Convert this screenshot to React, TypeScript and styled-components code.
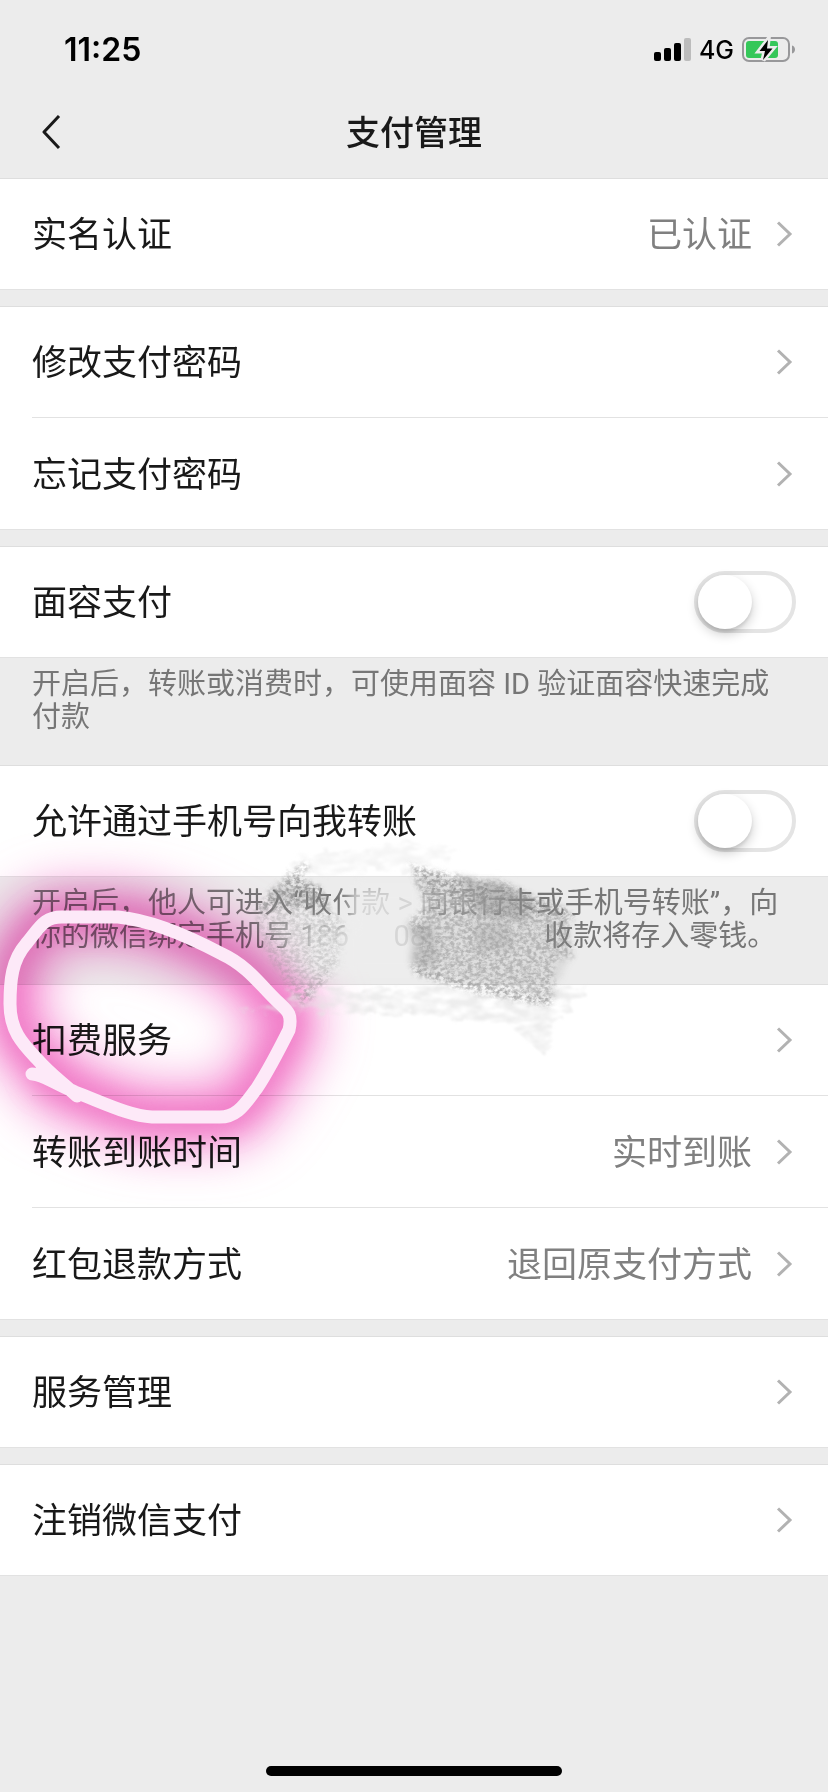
import React from "react";
import styled, { createGlobalStyle, css } from "styled-components";

const GlobalStyle = createGlobalStyle`
  *, *::before, *::after { box-sizing: border-box; }
  body {
    margin: 0;
    background: #ececec;
    color: #191919;
    font-family: Inter, "Noto Sans CJK SC", sans-serif;
  }
`;

const Page = styled.div`
  position: relative;
  display: flex;
  flex-direction: column;
  min-height: 100vh;
  overflow: hidden;
  background: #ececec;
`;

const StatusBar = styled.div`
  display: flex;
  align-items: center;
  justify-content: space-between;
  height: 88px;
  padding: 12px 32px 0 64px;
  color: #000;
`;

const Clock = styled.time`
  font-size: 32px;
  line-height: 40px;
  font-weight: 600;
`;

const StatusIcons = styled.div`
  display: flex;
  align-items: center;
  gap: 8px;
`;

const Network = styled.span`
  font-size: 25px;
  line-height: 32px;
  font-weight: 500;
`;

const NavBar = styled.header`
  display: grid;
  grid-template-columns: 88px 1fr 88px;
  align-items: center;
  height: 90px;
`;

const BackButton = styled.button`
  display: flex;
  align-items: center;
  height: 88px;
  padding: 0 0 0 40px;
  border: 0;
  background: none;
  color: #191919;
`;

const Title = styled.h1`
  margin: 0;
  text-align: center;
  font-size: 34px;
  line-height: 48px;
  font-weight: 500;
`;

const Main = styled.main`
  display: flex;
  flex-direction: column;
`;

const Group = styled.section<{ $spaced?: boolean }>`
  margin-bottom: ${(p) => (p.$spaced ? "16px" : "0")};
  background: #fff;
  box-shadow: inset 0 1px #dedede;
`;

const rowStyles = css`
  display: flex;
  align-items: center;
  gap: 20px;
  width: 100%;
  height: 112px;
  padding: 0 32px;
  border: 0;
  background: linear-gradient(#e2e2e2, #e2e2e2) 32px 100% / 100% 1px no-repeat;
  color: #191919;
  font-family: inherit;
  font-size: 35px;
  line-height: 48px;
  text-align: left;

  &:last-child {
    background-position: 0 100%;
  }
`;

const LinkRow = styled.button`
  ${rowStyles}
`;

const SwitchRow = styled.label`
  ${rowStyles}
`;

const Label = styled.span`
  flex: 1;
`;

const Value = styled.span`
  color: #808080;
`;

const Switch = styled.input`
  appearance: none;
  display: flex;
  width: 102px;
  height: 62px;
  margin: 0;
  padding: 0;
  border: 4px solid #e4e4e4;
  border-radius: 31px;
  background: #fff;

  &::before {
    content: "";
    width: 54px;
    height: 54px;
    border-radius: 50%;
    background: #fff;
    box-shadow: 0 5px 12px rgba(0, 0, 0, 0.2), 0 3px 3px rgba(0, 0, 0, 0.08);
  }

  &:checked {
    justify-content: flex-end;
    border-color: #07c160;
    background: #07c160;
  }
`;

const Hint = styled.p`
  margin: 0;
  padding: 10px 16px 31px 32px;
  color: #767676;
  font-family: Roboto, "Noto Sans CJK SC", sans-serif;
  font-size: 29px;
  line-height: 33px;
  white-space: pre-line;
`;

const HomeIndicator = styled.div`
  align-self: center;
  width: 296px;
  height: 10px;
  margin: auto 0 16px;
  border-radius: 5px;
  background: #000;
`;

const Drawing = styled.svg`
  position: absolute;
  top: 0;
  left: 0;
  pointer-events: none;
  mix-blend-mode: normal;
`;

const GlowDrawing = styled(Drawing)`
  mix-blend-mode: multiply;
`;

const Chevron = () => (
  <svg width="24" height="32" viewBox="0 0 24 32" fill="none" aria-hidden="true">
    <path d="M6 4.500 18 16 6 27.500" stroke="#b2b2b2" strokeWidth="3" />
  </svg>
);

const BackIcon = () => (
  <svg width="24" height="36" viewBox="0 0 24 36" fill="none" aria-hidden="true">
    <path d="M19 1 4 17 19 33" stroke="currentColor" strokeWidth="3" strokeLinejoin="round" />
  </svg>
);

const SignalIcon = () => (
  <svg width="37" height="24" viewBox="0 0 37 24" aria-hidden="true">
    <rect x="0" y="14" width="7" height="9" rx="2" />
    <rect x="10" y="10" width="7" height="13" rx="2" />
    <rect x="20" y="5" width="7" height="18" rx="2" />
    <rect x="30" y="0" width="7" height="23" rx="2" fill="#bcbcbc" />
  </svg>
);

const BatteryIcon = () => (
  <svg width="54" height="28" viewBox="0 0 54 28" aria-hidden="true">
    <rect x="1" y="2" width="46" height="23" rx="6" fill="none" stroke="#98989a" strokeWidth="2" />
    <path d="M50 9.500c4 1 4 7 0 8z" fill="#98989a" />
    <rect x="4" y="5" width="32" height="17" rx="3" fill="#35c759" />
    <path
      d="M26 4 17.500 15H23L21 24 30.500 12.500H25Z"
      fill="#000"
      stroke="#ececec"
      strokeWidth="5"
      paintOrder="stroke"
    />
  </svg>
);

const LOOP =
  "M32 1074C42 1074 50 1081 75 1092C104 1103 130 1116 152 1117H218C238 1118 246 1102 257 1088C270 1068 280 1048 289 1030C293 1012 286 1010 276 1000C262 987 248 966 222 954C190 937 150 920 118 917H64C44 916 40 927 26 944C12 960 10 980 10 1004C10 1032 24 1045 38 1060C50 1074 62 1082 77 1096";

const MarkerGlow = () => (
  <GlowDrawing width="660" height="1300" viewBox="0 0 660 1300" fill="none" aria-hidden="true">
    <defs>
      <filter id="wide" filterUnits="userSpaceOnUse" x="-160" y="740" width="640" height="560">
        <feGaussianBlur stdDeviation="25" />
      </filter>
      <filter id="near" filterUnits="userSpaceOnUse" x="-160" y="740" width="640" height="560">
        <feGaussianBlur stdDeviation="12" />
      </filter>
    </defs>
    <path d={LOOP} stroke="#f583cf" strokeWidth="58" filter="url(#wide)" />
    <path d={LOOP} stroke="#ec6cbd" strokeWidth="28" filter="url(#near)" opacity="0.65" />
  </GlowDrawing>
);

const PencilMarks = () => (
  <Drawing width="660" height="1300" viewBox="0 0 660 1300" fill="none" aria-hidden="true">
    <defs>
      <filter id="haze" x="-20%" y="-20%" width="140%" height="140%">
        <feGaussianBlur stdDeviation="7" />
      </filter>
      <filter id="shade" x="-20%" y="-20%" width="140%" height="140%">
        <feTurbulence type="fractalNoise" baseFrequency="0.05" numOctaves="3" seed="3" result="n" />
        <feDisplacementMap in="SourceGraphic" in2="n" scale="18" result="d" />
        <feGaussianBlur in="d" stdDeviation="3" />
      </filter>
      <filter id="grain" x="-10%" y="-10%" width="120%" height="120%">
        <feTurbulence type="fractalNoise" baseFrequency="0.22 0.3" numOctaves="4" seed="4" result="n" />
        <feColorMatrix in="n" type="matrix" values="0 0 0 0 0  0 0 0 0 0  0 0 0 0 0  3 0 0 0 -1.05" result="m" />
        <feDisplacementMap in="SourceGraphic" in2="n" scale="16" result="d" />
        <feGaussianBlur in="d" stdDeviation="2" result="s" />
        <feComposite in="s" in2="m" operator="in" result="g" />
        <feGaussianBlur in="g" stdDeviation="0.6" />
      </filter>
      <filter id="chalk" x="-10%" y="-10%" width="120%" height="120%">
        <feTurbulence type="fractalNoise" baseFrequency="0.06 0.14" numOctaves="4" seed="9" result="n" />
        <feColorMatrix in="n" type="matrix" values="0 0 0 0 0  0 0 0 0 0  0 0 0 0 0  2.5 0 0 0 -0.7" result="m" />
        <feDisplacementMap in="SourceGraphic" in2="n" scale="20" result="d" />
        <feComposite in="d" in2="m" operator="in" result="g" />
        <feGaussianBlur in="g" stdDeviation="1" />
      </filter>
    </defs>

    <g fill="#ededed" filter="url(#haze)">
      <path d="M350 885H425V925H470V950H552V976H310V925H350Z" opacity="0.8" />
      <path d="M262 920H345V975H300Z" opacity="0.45" />
      <path d="M425 885H505V912H425Z" opacity="0.55" />
    </g>

    <g fill="#e4e4e4" filter="url(#chalk)">
      <path d="M285 860 355 848 430 843 462 854 400 870 300 876Z" opacity="0.4" />
      <path d="M240 1012 310 990 590 986 560 1018 545 1056 508 1024 430 1016 330 1014Z" opacity="0.65" />
    </g>

    <g fill="#8c8c8c" filter="url(#shade)">
      <path d="M412 870 500 886 565 910 570 950 552 998 480 985 415 968 425 905Z" opacity="0.16" />
      <path d="M462 880 504 884 535 902 530 922 480 914Z" opacity="0.4" />
      <path d="M475 925 500 920 515 940 500 955 475 950Z" opacity="0.25" />
      <path d="M412 926 436 928 434 962 414 966Z" opacity="0.3" />
      <path d="M272 890 310 886 325 906 270 908Z" opacity="0.25" />
    </g>

    <g fill="#8c8c8c" filter="url(#grain)">
      <path d="M410 864 470 879 504 882 532 896 565 907 573 914 568 930 573 957 556 960 552 1003 520 998 480 989 450 980 412 971 422 940 408 925 425 905 414 878Z" opacity="0.5" />
      <path d="M412 866 470 880 532 897 575 916 500 916 430 888Z" opacity="0.4" />
      <path d="M310 864 302 880 322 888 330 906 345 925 336 965 300 1003 286 985 264 950 256 920 266 900 284 880Z" opacity="0.3" />
      <path d="M310 862 300 880 320 886 328 905 290 908 252 912 272 892 284 880Z" opacity="0.7" />
      <path d="M412 966 450 978 490 988 552 1000 552 1006 480 994 412 974Z" opacity="0.6" />
      <path d="M344 960 300 1006 300 998Z" opacity="0.8" />
    </g>

    <path d={LOOP} stroke="#fde9f8" strokeWidth="13" strokeLinecap="round" strokeLinejoin="round" />
  </Drawing>
);

const NavRow = ({ label, value }: { label: string; value?: string }) => (
  <LinkRow type="button">
    <Label>{label}</Label>
    {value && <Value>{value}</Value>}
    <Chevron />
  </LinkRow>
);

const ToggleRow = ({ label }: { label: string }) => (
  <SwitchRow>
    <Label>{label}</Label>
    <Switch type="checkbox" role="switch" />
  </SwitchRow>
);

export default function App() {
  return (
    <Page lang="zh-CN">
      <GlobalStyle />
      <StatusBar>
        <Clock>11:25</Clock>
        <StatusIcons>
          <SignalIcon />
          <Network>4G</Network>
          <BatteryIcon />
        </StatusIcons>
      </StatusBar>
      <NavBar>
        <BackButton type="button" aria-label="返回">
          <BackIcon />
        </BackButton>
        <Title>支付管理</Title>
      </NavBar>
      <Main>
        <Group $spaced>
          <NavRow label="实名认证" value="已认证" />
        </Group>
        <Group $spaced>
          <NavRow label="修改支付密码" />
          <NavRow label="忘记支付密码" />
        </Group>
        <Group>
          <ToggleRow label="面容支付" />
        </Group>
        <Hint>{"开启后，转账或消费时，可使用面容 ID 验证面容快速完成\n付款"}</Hint>
        <Group>
          <ToggleRow label="允许通过手机号向我转账" />
        </Group>
        <Hint>
          {
            "开启后，他人可进入“收付款 > 向银行卡或手机号转账”，向\n你的微信绑定手机号 186\u2003\u200208\u2003\u2003\u2003\u2003收款将存入零钱。"
          }
        </Hint>
        <Group $spaced>
          <NavRow label="扣费服务" />
          <NavRow label="转账到账时间" value="实时到账" />
          <NavRow label="红包退款方式" value="退回原支付方式" />
        </Group>
        <Group $spaced>
          <NavRow label="服务管理" />
        </Group>
        <Group>
          <NavRow label="注销微信支付" />
        </Group>
      </Main>
      <HomeIndicator />
      <MarkerGlow />
      <PencilMarks />
    </Page>
  );
}
